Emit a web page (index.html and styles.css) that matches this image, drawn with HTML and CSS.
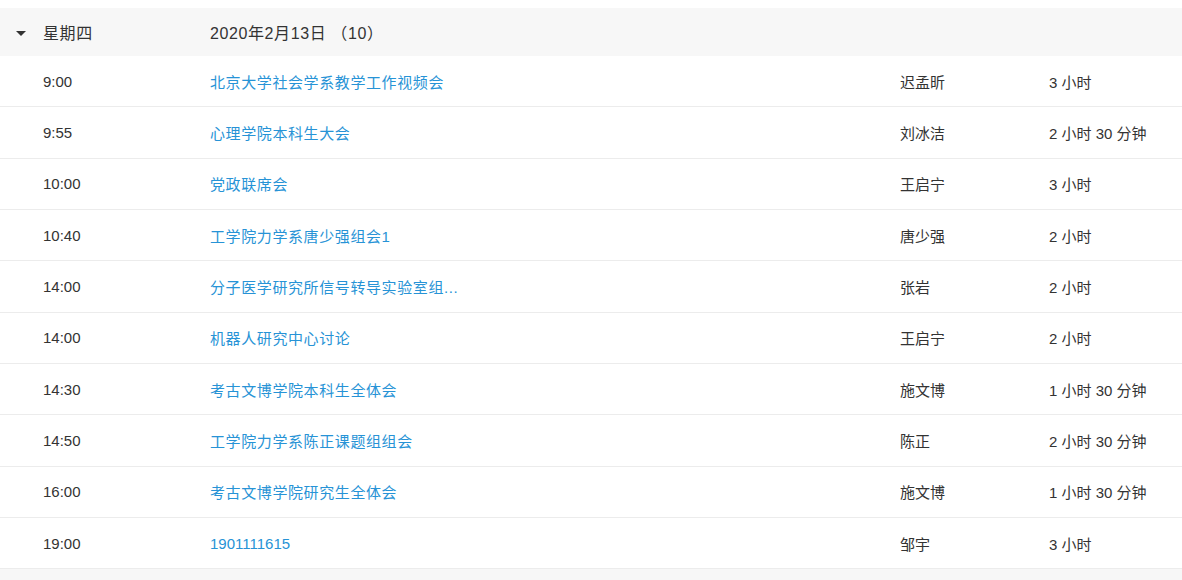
FILE: index.html
```html
<!DOCTYPE html>
<html lang="zh">
<head>
<meta charset="utf-8">
<link rel="stylesheet" href="styles.css">
</head>
<body>
<div class="agenda">
  <div class="group-head">
    <div class="day"><span class="caret"></span><span>星期四</span></div>
    <div class="date">2020年2月13日 （10）</div>
  </div>
  <div class="row"><div class="time">9:00</div><a class="title">北京大学社会学系教学工作视频会</a><div class="who">迟孟昕</div><div class="dur">3 小时</div></div>
  <div class="row"><div class="time">9:55</div><a class="title">心理学院本科生大会</a><div class="who">刘冰洁</div><div class="dur">2 小时 30 分钟</div></div>
  <div class="row"><div class="time">10:00</div><a class="title">党政联席会</a><div class="who">王启宁</div><div class="dur">3 小时</div></div>
  <div class="row"><div class="time">10:40</div><a class="title">工学院力学系唐少强组会1</a><div class="who">唐少强</div><div class="dur">2 小时</div></div>
  <div class="row"><div class="time">14:00</div><a class="title">分子医学研究所信号转导实验室组...</a><div class="who">张岩</div><div class="dur">2 小时</div></div>
  <div class="row"><div class="time">14:00</div><a class="title">机器人研究中心讨论</a><div class="who">王启宁</div><div class="dur">2 小时</div></div>
  <div class="row"><div class="time">14:30</div><a class="title">考古文博学院本科生全体会</a><div class="who">施文博</div><div class="dur">1 小时 30 分钟</div></div>
  <div class="row"><div class="time">14:50</div><a class="title">工学院力学系陈正课题组组会</a><div class="who">陈正</div><div class="dur">2 小时 30 分钟</div></div>
  <div class="row"><div class="time">16:00</div><a class="title">考古文博学院研究生全体会</a><div class="who">施文博</div><div class="dur">1 小时 30 分钟</div></div>
  <div class="row"><div class="time">19:00</div><a class="title title-num">1901111615</a><div class="who">邹宇</div><div class="dur">3 小时</div></div>
  <div class="tail"></div>
</div>
</body>
</html>
```
FILE: styles.css
```css
* { box-sizing: border-box; }
html, body { margin: 0; padding: 0; background: #fff; }
body {
  font-family: "Liberation Sans", "Noto Sans CJK SC", sans-serif;
  font-size: 15px;
  color: #333;
}
.agenda { padding-top: 8px; }
.group-head {
  display: grid;
  grid-template-columns: 210px 1fr;
  align-items: center;
  height: 48px;
  background: #f7f7f7;
  font-size: 16px;
  letter-spacing: 0.6px;
}
.day {
  display: flex;
  align-items: center;
  padding-left: 16px;
}
.caret {
  width: 0; height: 0;
  border-left: 5px solid transparent;
  border-right: 5px solid transparent;
  border-top: 5px solid #333;
  margin-right: 17px;
  margin-top: 2px;
}
.row {
  display: grid;
  grid-template-columns: 210px 690px 149px 1fr;
  align-items: center;
  height: 51.33px;
  border-bottom: 1px solid #ececec;
}
.time { padding-left: 43px; }
.title { color: #2793d6; text-decoration: none; letter-spacing: 0.6px; }
.title-num { letter-spacing: 0; }
.tail { height: 12px; background: #f7f7f7; }
```
